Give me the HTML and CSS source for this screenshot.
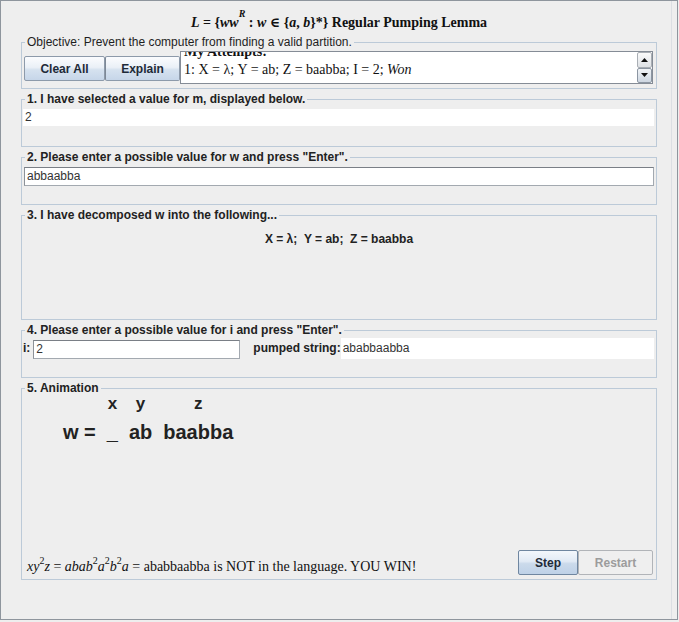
FILE: index.html
```html
<!DOCTYPE html>
<html>
<head>
<meta charset="utf-8">
<link rel="stylesheet" href="styles.css">
</head>
<body>
<div class="window">
  <div class="title"><i>L</i> = {<i>ww<sup class="tsup">R</sup></i> : <i>w</i> ∈ {<i>a</i>, <i>b</i>}*} Regular Pumping Lemma</div>

  <fieldset class="box obj">
    <legend class="plain">Objective: Prevent the computer from finding a valid partition.</legend>
    <div class="obj-row">
      <button class="btn clear">Clear All</button>
      <button class="btn explain">Explain</button>
      <div class="attempts">
        <div class="att-view">
          <div class="att-lines">
            <div class="att-head">My Attempts:</div>
            <div>1: X = λ; Y = ab; Z = baabba; I = 2; <i>Won</i></div>
          </div>
        </div>
        <div class="sbar">
          <div class="sb-btn up"><svg width="7" height="4" viewBox="0 0 7 4"><path d="M0 4 L3.5 0 L7 4 Z" fill="#111"/></svg></div>
          <div class="sb-btn down"><svg width="7" height="4" viewBox="0 0 7 4"><path d="M0 0 L7 0 L3.5 4 Z" fill="#111"/></svg></div>
        </div>
      </div>
    </div>
  </fieldset>

  <fieldset class="box s1">
    <legend>1. I have selected a value for m, displayed below.</legend>
    <div class="field plainfield">2</div>
  </fieldset>

  <fieldset class="box s2">
    <legend>2. Please enter a possible value for w and press "Enter".</legend>
    <div class="field input wfield">abbaabba</div>
  </fieldset>

  <fieldset class="box s3">
    <legend>3. I have decomposed w into the following...</legend>
    <div class="decomp">X = λ;&nbsp;&nbsp;Y = ab;&nbsp;&nbsp;Z = baabba</div>
  </fieldset>

  <fieldset class="box s4">
    <legend>4. Please enter a possible value for i and press "Enter".</legend>
    <div class="irow">
      <span class="lbl">i:</span>
      <div class="field input ifield">2</div>
      <span class="lbl pumped">pumped string:</span>
      <div class="field plainfield pfield">ababbaabba</div>
    </div>
  </fieldset>

  <fieldset class="box s5">
    <legend>5. Animation</legend>
    <div class="anim-content">
      <div class="anim">
        <span class="lab c2">x</span>
        <span class="lab c3">y</span>
        <span class="lab c4">z</span>
        <span class="val c1">w =</span>
        <span class="val c2">_</span>
        <span class="val c3">ab</span>
        <span class="val c4">baabba</span>
      </div>
      <div class="bottom">
        <div class="result"><i>xy</i><sup>2</sup><i>z</i> = <i>abab</i><sup>2</sup><i>a</i><sup>2</sup><i>b</i><sup>2</sup><i>a</i> = ababbaabba is NOT in the language. YOU WIN!</div>
        <div class="btns">
          <button class="btn step">Step</button>
          <button class="btn restart">Restart</button>
        </div>
      </div>
    </div>
  </fieldset>
</div>
</body>
</html>
```

FILE: styles.css
```css
* { box-sizing: border-box; }

html, body {
  margin: 0;
  background: #eeeeee;
}

.window {
  width: 678px;
  height: 620px;
  border: 1px solid #8e959d;
  background: #eeeeee;
  padding-left: 20px;
  display: flex;
  flex-direction: column;
  gap: 3px;
  font-family: "Liberation Sans", Arial, sans-serif;
  font-size: 12px;
  color: #222;
  box-shadow: inset -5px 0 0 #eeeeee, inset -6px 0 0 #dcdfe3;
}

.title {
  height: 31px;
  padding-top: 13px;
  line-height: 16px;
  font-family: "Liberation Serif", "DejaVu Serif", serif;
  font-weight: bold;
  font-size: 14px;
  color: #111;
  text-align: center;
  width: 636px;
  white-space: nowrap;
}

.tsup {
  font-size: 10px;
  line-height: 0;
  vertical-align: 10px;
}

fieldset.box {
  margin: 0;
  padding: 0;
  border: 1px solid #bccad8;
  width: 636px;
  min-width: 0;
}

legend {
  margin-left: 3px;
  padding: 0 2px;
  font-weight: bold;
  font-size: 12px;
  line-height: 14px;
  color: #222;
}

legend.plain {
  font-weight: normal;
  color: #1e1e1e;
}

/* objective */
.obj-row {
  display: flex;
  align-items: flex-start;
  height: 39px;
  padding: 2px 2px 0 2px;
}

.btn {
  font-family: "Liberation Sans", Arial, sans-serif;
  font-weight: bold;
  font-size: 12px;
  color: #1e2a38;
  height: 25px;
  padding: 0;
  border: 1px solid #8d9aaa;
  border-radius: 2px;
  background: linear-gradient(#fbfcfe 0%, #eaf0f7 45%, #d6e2ef 55%, #c6d6e9 100%);
}

.clear { width: 81px; margin-top: 5px; }
.explain { width: 75px; margin-top: 5px; border-left-color: #7d8896; }

.attempts {
  width: 473px;
  height: 33px;
  border: 1px solid #858c96;
  background: #fff;
  display: flex;
}

.att-view {
  flex: 1;
  overflow: hidden;
  padding-left: 3px;
}

.att-lines {
  margin-top: -9px;
  font-family: "Liberation Serif", "DejaVu Serif", serif;
  font-size: 14px;
  line-height: 18px;
  color: #111;
  white-space: nowrap;
}

.att-head {
  font-weight: bold;
}

.sbar {
  width: 15px;
  display: flex;
  flex-direction: column;
}

.sb-btn {
  flex: 1;
  display: flex;
  align-items: center;
  justify-content: center;
  border: 1px solid #a9aeb4;
  border-radius: 2px;
  background: linear-gradient(#fafafa, #eceef0 50%, #dfe2e6);
}

.sb-btn.down {
  border-color: #8c96a2;
  background: linear-gradient(#f2f4f7, #dfe5ec 50%, #cdd6e1);
}

/* fields */
.field {
  font-family: "Liberation Sans", Arial, sans-serif;
  font-size: 12px;
  color: #333;
  background: #fff;
  white-space: nowrap;
}

.plainfield {
  height: 17px;
  line-height: 17px;
  padding-left: 2px;
}

.s1 .plainfield {
  margin: 3px 2px 20px 1px;
}

.input {
  border: 1px solid #a3a9b0;
  border-top-color: #7a7f86;
  border-left-color: #8d9298;
  padding-left: 2px;
}

.wfield {
  height: 19px;
  line-height: 17px;
  margin: 3px 2px 18px 2px;
}

/* section 3 */
.decomp {
  height: 97px;
  padding-top: 10px;
  text-align: center;
  font-weight: bold;
  font-size: 12px;
  line-height: 14px;
  color: #222;
}

/* section 4 */
.irow {
  display: flex;
  align-items: flex-start;
  height: 40px;
  padding: 1px 2px 0 1px;
}

.lbl {
  font-weight: bold;
  line-height: 21px;
}

.ifield {
  width: 207px;
  height: 19px;
  line-height: 17px;
  margin: 2px 0 0 3px;
}

.pumped {
  margin-left: 13px;
}

.pfield {
  flex: 1;
  height: 21px;
  line-height: 21px;
  margin-left: 0;
}

/* section 5 */
.anim-content {
  height: 184px;
  display: flex;
  flex-direction: column;
  justify-content: space-between;
}

.anim {
  display: grid;
  grid-template-columns: auto auto auto auto;
  grid-template-rows: 12px 24px;
  column-gap: 11px;
  row-gap: 10px;
  justify-content: start;
  padding: 3px 0 0 41px;
  font-weight: bold;
  color: #222;
}

.lab {
  grid-row: 1;
  font-size: 17px;
  line-height: 12px;
  text-align: center;
}

.val {
  grid-row: 2;
  font-size: 20px;
  line-height: 24px;
  text-align: center;
  white-space: nowrap;
}

.c1 { grid-column: 1; }
.c2 { grid-column: 2; }
.c3 { grid-column: 3; }
.c4 { grid-column: 4; }

.bottom {
  display: flex;
  justify-content: space-between;
  align-items: flex-end;
  padding: 0 3px 4px 5px;
}

.result {
  font-family: "Liberation Serif", "DejaVu Serif", serif;
  font-size: 14px;
  line-height: 16px;
  color: #111;
  white-space: nowrap;
}

.result sup {
  font-size: 10px;
  line-height: 0;
  vertical-align: 7px;
}

.btns {
  display: flex;
}

.step {
  width: 60px;
  border-color: #6f86a0;
  background: linear-gradient(#f3f7fc 0%, #e1eaf5 45%, #cbdaeb 55%, #bed1e7 100%);
}

.restart {
  width: 75px;
  color: #9c9c9c;
  border-color: #b1b4b8;
  background: #efefef;
}
```
